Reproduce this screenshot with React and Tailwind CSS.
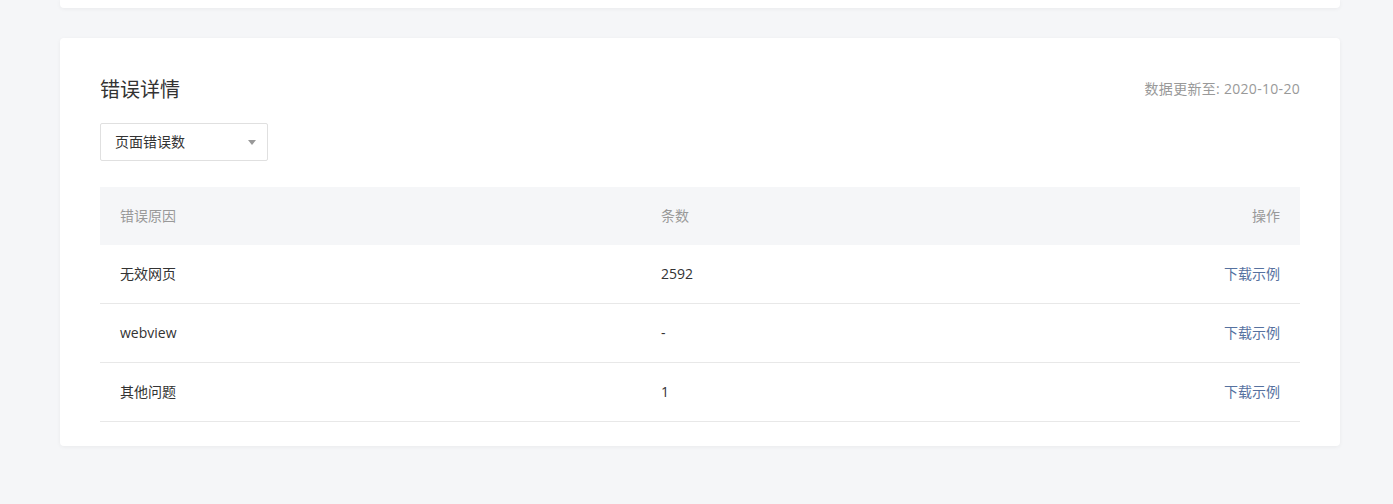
import React from 'react';

const rows = [
  { reason: '无效网页', count: '2592' },
  { reason: 'webview', count: '-' },
  { reason: '其他问题', count: '1' },
];

export default function App() {
  return (
    <div
      className="min-h-[504px] bg-[#f5f6f8] text-[#333]"
      style={{ fontFamily: '"Open Sans", "Noto Sans CJK SC", sans-serif' }}
    >
      <div className="ml-[60px] w-[1280px]">
        {/* 上一张卡片的底部 */}
        <div className="h-[8px] rounded-b-[4px] bg-white shadow-[0_1px_4px_rgba(0,0,0,0.05)]"></div>

        <div className="mt-[30px] rounded-[4px] bg-white px-[40px] pt-[38px] pb-[24px] shadow-[0_1px_4px_rgba(0,0,0,0.05)]">
          <div className="flex h-[28px] items-center justify-between">
            <h2 className="text-[20px] leading-[28px] text-[#333]">错误详情</h2>
            <span className="-mt-[2px] text-[14px] leading-[20px] tracking-[0.3px] text-[#999]">数据更新至: 2020-10-20</span>
          </div>

          <div className="mt-[19px] flex h-[38px] w-[168px] items-center justify-between rounded-[2px] border border-[#e0e0e0] pr-[11px] pb-[2px] pl-[14px]">
            <span className="text-[14px] text-[#333]">页面错误数</span>
            <span className="mt-[2px] h-0 w-0 border-x-[4px] border-t-[5px] border-x-transparent border-t-[#999]"></span>
          </div>

          <div className="mt-[26px] text-[14px]">
            <div className="grid h-[58px] grid-cols-[541px_1fr_auto] items-center bg-[#f5f6f8] px-[20px] pb-[2px] text-[#999]">
              <span>错误原因</span>
              <span>条数</span>
              <span className="text-right">操作</span>
            </div>
            {rows.map((row) => (
              <div
                key={row.reason}
                className="grid h-[59px] grid-cols-[541px_1fr_auto] items-center border-b border-[#e8e8e8] px-[20px] pb-[2px]"
              >
                <span>{row.reason}</span>
                <span>{row.count}</span>
                <span className="cursor-pointer text-right text-[#56719f]">下载示例</span>
              </div>
            ))}
          </div>
        </div>
      </div>
    </div>
  );
}
